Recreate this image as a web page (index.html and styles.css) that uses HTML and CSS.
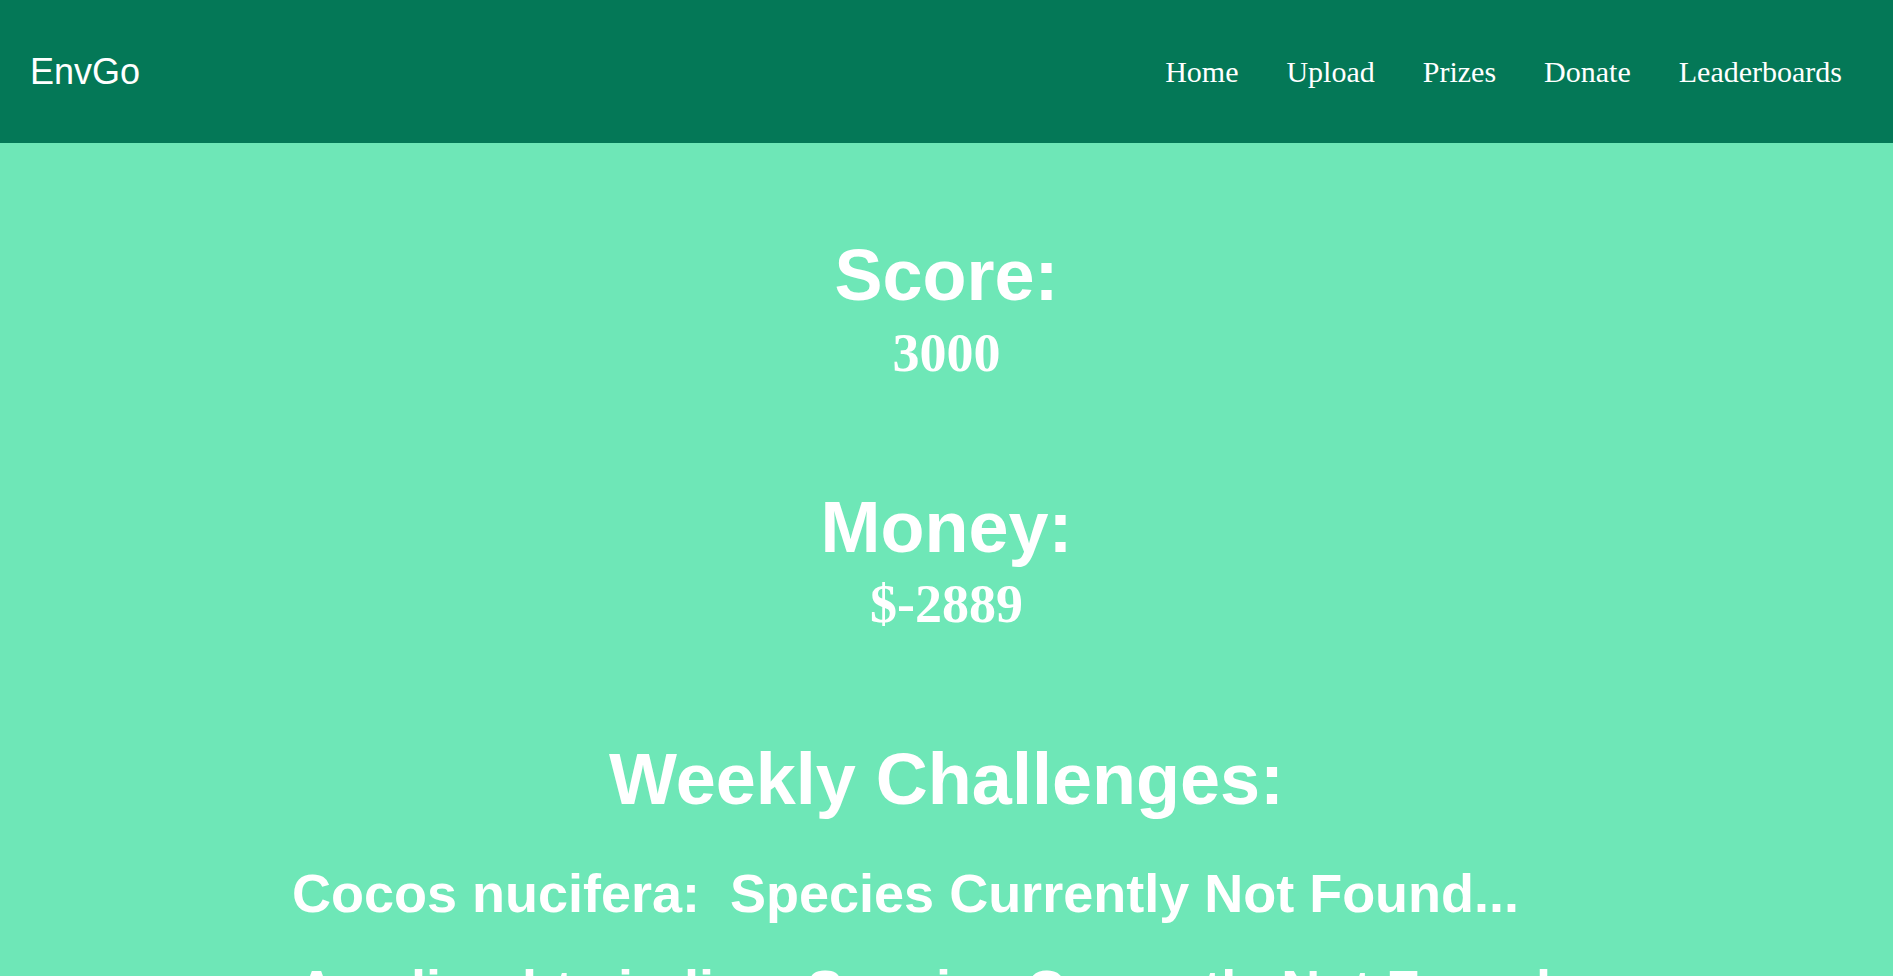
FILE: index.html
```html
<!DOCTYPE html>
<html lang="en">
<head>
<meta charset="utf-8">
<title>EnvGo</title>
<link rel="stylesheet" href="styles.css">
</head>
<body>
<header class="topbar">
  <a class="brand" href="#">EnvGo</a>
  <nav class="nav">
    <a href="#">Home</a>
    <a href="#">Upload</a>
    <a href="#">Prizes</a>
    <a href="#">Donate</a>
    <a href="#">Leaderboards</a>
  </nav>
</header>
<main class="content">
  <section class="stat">
    <h1 class="stat-title">Score:</h1>
    <h2 class="stat-value">3000</h2>
  </section>
  <section class="stat stat-money">
    <h1 class="stat-title">Money:</h1>
    <h2 class="stat-value">$-2889</h2>
  </section>
  <section class="challenges">
    <h1 class="stat-title">Weekly Challenges:</h1>
    <h2 class="challenge first">Cocos nucifera:&nbsp; Species Currently Not Found...<span class="status-slot"></span></h2>
    <h2 class="challenge">Azadirachta indica: Species Currently Not Found...</h2>
  </section>
</main>
</body>
</html>
```

FILE: styles.css
```css
html, body {
  margin: 0;
  padding: 0;
}

body {
  background: #6ee7b7;
  color: #ffffff;
  font-family: "Liberation Sans", Arial, sans-serif;
  overflow: hidden;
}

.topbar {
  height: 143px;
  background: #047857;
  display: flex;
  align-items: center;
  justify-content: space-between;
  padding: 0 51px 0 30px;
}

.brand {
  color: #ffffff;
  text-decoration: none;
  font-family: "Liberation Sans", Arial, sans-serif;
  font-size: 36px;
}

.nav {
  display: flex;
  gap: 48px;
}

.nav a {
  color: #ffffff;
  text-decoration: none;
  font-family: "Liberation Serif", "Times New Roman", serif;
  font-size: 30px;
}

.content {
  display: flex;
  flex-direction: column;
  align-items: center;
  text-align: center;
  padding-top: 91px;
}

.stat,
.challenges {
  display: flex;
  flex-direction: column;
  align-items: center;
}

.stat-money {
  margin-top: 102px;
}

.challenges {
  margin-top: 103px;
}

.stat-title {
  margin: 0;
  font-family: "Liberation Sans", Arial, sans-serif;
  font-weight: bold;
  font-size: 72px;
  line-height: 83px;
}

.stat-value {
  margin: 5px 0 0;
  font-family: "Liberation Serif", "Times New Roman", serif;
  font-weight: bold;
  font-size: 54px;
  line-height: 62px;
}

.stat-money .stat-value {
  margin-top: 4px;
}

.challenge {
  margin: 34px 0 0;
  font-family: "Liberation Sans", Arial, sans-serif;
  font-weight: bold;
  font-size: 54px;
  line-height: 62px;
  white-space: nowrap;
}

.challenge.first {
  margin-top: 41px;
}

.status-slot {
  display: inline-block;
  width: 82px;
}
```
